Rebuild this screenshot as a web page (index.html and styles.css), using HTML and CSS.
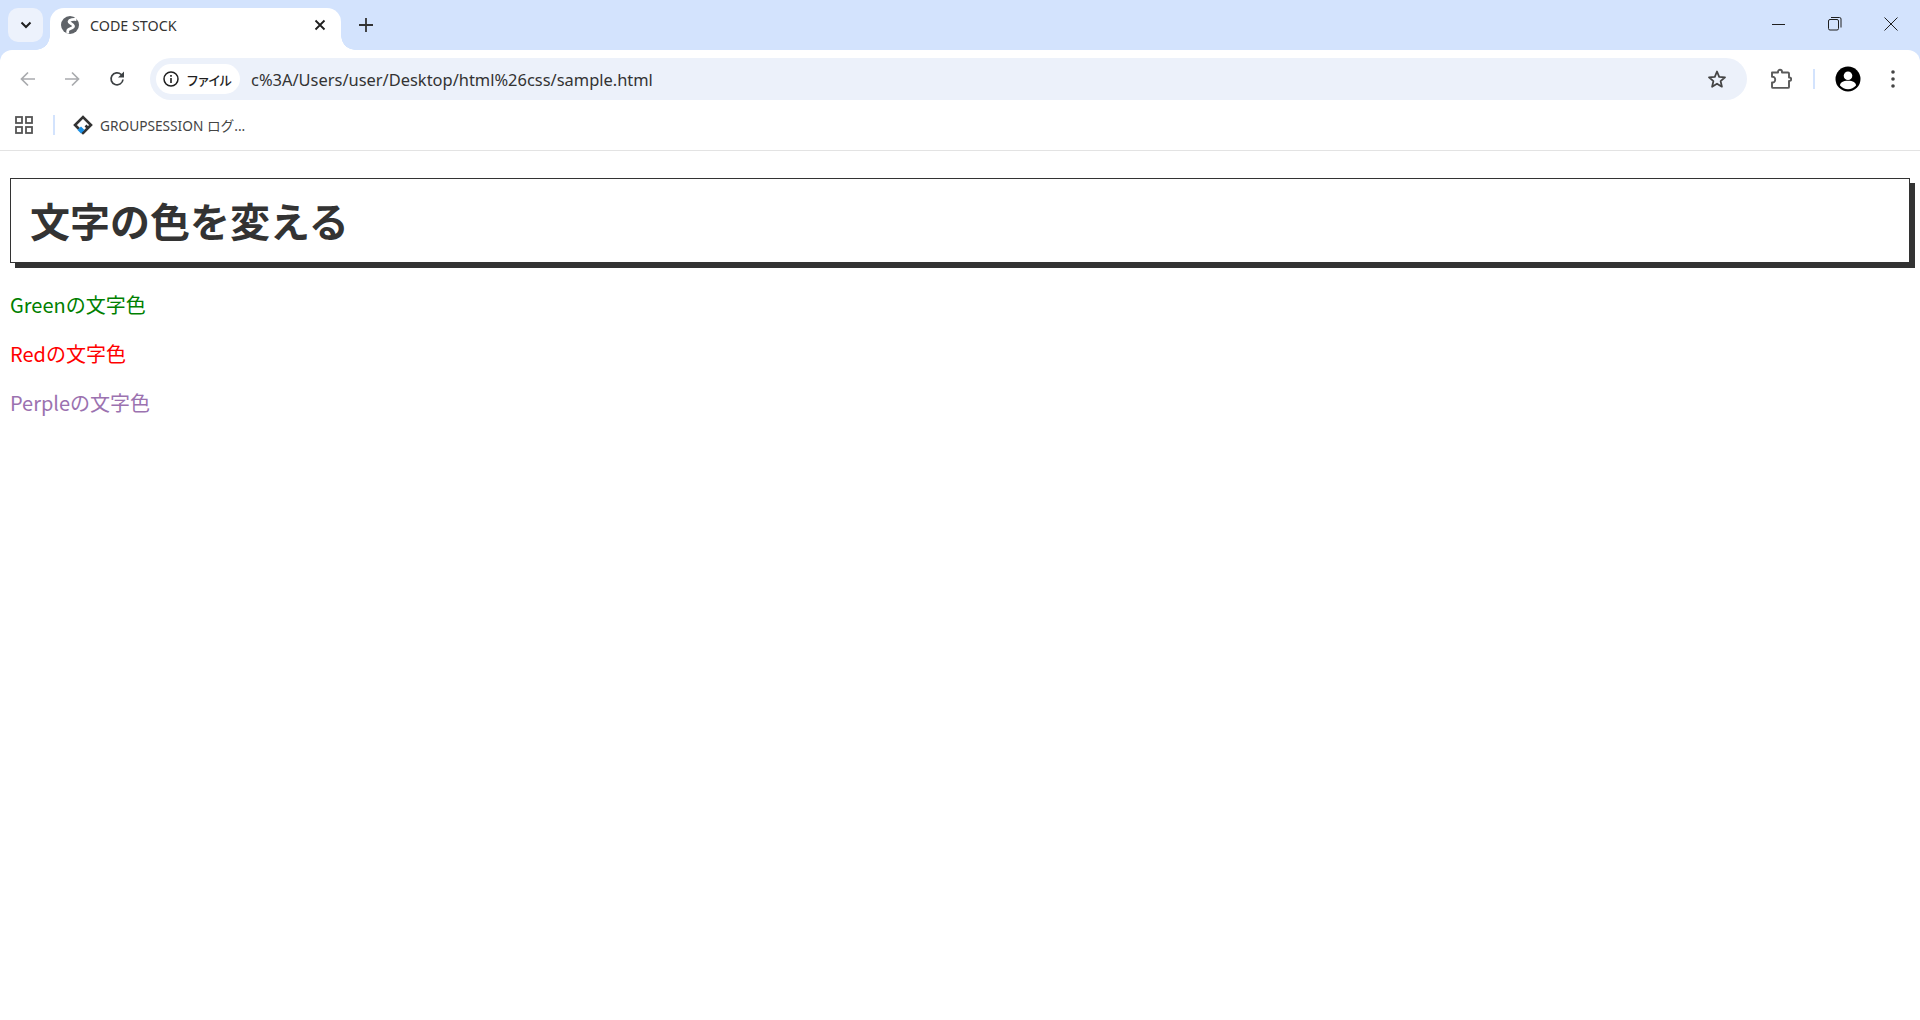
FILE: index.html
```html
<!DOCTYPE html>
<html lang="ja">
<head>
<meta charset="utf-8">
<title>CODE STOCK</title>
<link rel="stylesheet" href="styles.css">
</head>
<body>
<header class="chrome">
  <div class="tabstrip">
    <button class="tab-search" aria-label="タブを検索">
      <svg width="16" height="16" viewBox="0 0 16 16"><path d="M3.500 5.500L8 10l4.500-4.500" fill="none" stroke="#1f1f1f" stroke-width="2"/></svg>
    </button>
    <div class="tab">
      <svg class="tab-favicon" width="18" height="18" viewBox="0 0 18 18"><circle cx="9" cy="9" r="9" fill="#5f6368"/><path d="M15.500 3.500C12.500 3 8.500 3.500 8 5.500c-.4 1.800 4 2.200 4.500 4.500.4 2-4.500 2.500-5.500 4-.5.800-.4 2-.2 3.500" fill="none" stroke="#fff" stroke-width="2.800"/></svg>
      <span class="tab-title">CODE STOCK</span>
      <svg class="tab-close" width="12" height="12" viewBox="0 0 12 12"><path d="M1.500 1.500l9 9M10.500 1.500l-9 9" stroke="#1f1f1f" stroke-width="1.800"/></svg>
    </div>
    <svg class="new-tab" width="14" height="14" viewBox="0 0 14 14"><path d="M7 0v14M0 7h14" stroke="#333" stroke-width="1.800"/></svg>
    <div class="window-controls">
      <svg width="14" height="14" viewBox="0 0 14 14"><path d="M0 7.500h13" stroke="#1f1f1f" stroke-width="1"/></svg>
      <svg width="14" height="14" viewBox="0 0 14 14"><rect x=".5" y="2.500" width="10" height="10.500" rx="1.500" fill="none" stroke="#1f1f1f"/><path d="M3 .5h8.500a1.500 1.500 0 0 1 1.500 1.500v8.500" fill="none" stroke="#1f1f1f"/></svg>
      <svg width="14" height="14" viewBox="0 0 14 14"><path d="M.5.5l13 13M13.500.5l-13 13" stroke="#1f1f1f" stroke-width="1"/></svg>
    </div>
  </div>
  <div class="toolbar">
    <svg class="nav-back" width="16" height="16" viewBox="0 0 16 16"><path d="M15 8H2M8 1.500L1.500 8 8 14.500" fill="none" stroke="#a9abae" stroke-width="1.700"/></svg>
    <svg class="nav-forward" width="16" height="16" viewBox="0 0 16 16"><path d="M1 8h13M8 1.500L14.500 8 8 14.500" fill="none" stroke="#a9abae" stroke-width="1.700"/></svg>
    <svg class="nav-reload" width="16" height="16" viewBox="0 0 16 16"><path d="M14 8.500a6 6 0 1 1-1.800-5L14 5" fill="none" stroke="#3c4043" stroke-width="1.700"/><path d="M15 .5v6H9z" fill="#3c4043"/></svg>
    <div class="omnibox">
      <div class="chip">
        <svg width="16" height="16" viewBox="0 0 16 16"><circle cx="8" cy="8" r="7" fill="none" stroke="#1f1f1f" stroke-width="1.500"/><path d="M8 7v5M8 4v1.800" stroke="#1f1f1f" stroke-width="1.600"/></svg>
        <span class="chip-label">ファイル</span>
      </div>
      <span class="url">c%3A/Users/user/Desktop/html%26css/sample.html</span>
      <svg class="star" width="20" height="20" viewBox="0 0 20 20"><path d="M10 2.500l2.200 5.300 5.800.5-4.400 3.800 1.300 5.600L10 14.700l-4.900 3 1.300-5.600L2 8.300l5.800-.5z" fill="none" stroke="#444" stroke-width="1.800" stroke-linejoin="round"/></svg>
    </div>
    <svg class="ext" width="22" height="22" viewBox="0 0 22 22"><path d="M2 4.500h6V3.800a2 2 0 0 1 4 0v.7h6a1 1 0 0 1 1 1V9.500h.5a1.700 1.700 0 0 1 0 3.400H19v6a1 1 0 0 1-1 1H3a1 1 0 0 1-1-1v-4.400c2 .3 3.200-1 3.200-2.900S4 8.500 2 8.800z" fill="#fff" stroke="#5a5a5a" stroke-width="1.900" stroke-linejoin="round"/></svg>
    <span class="toolbar-sep"></span>
    <svg class="avatar" width="26" height="26" viewBox="0 0 26 26"><circle cx="13" cy="13" r="12.500" fill="#000"/><circle cx="13" cy="9.800" r="4.300" fill="#fff"/><path d="M5 19.500c0-3 3-4.700 8-4.700s8 1.700 8 4.700c-2 2.300-5 3.700-8 3.700s-6-1.400-8-3.700z" fill="#fff"/></svg>
    <svg class="menu" width="4" height="18" viewBox="0 0 4 18"><circle cx="2" cy="2" r="1.800" fill="#444"/><circle cx="2" cy="9" r="1.800" fill="#444"/><circle cx="2" cy="16" r="1.800" fill="#444"/></svg>
  </div>
  <div class="bookmarks">
    <svg width="18" height="18" viewBox="0 0 18 18"><g fill="none" stroke="#555" stroke-width="1.800"><rect x="1" y="1" width="6" height="6"/><rect x="11" y="1" width="6" height="6"/><rect x="1" y="11" width="6" height="6"/><rect x="11" y="11" width="6" height="6"/></g></svg>
    <span class="bookmark-sep"></span>
    <svg class="bookmark-icon" width="20" height="20" viewBox="0 0 20 20"><path d="M6 14L2 10l8-8 8 8-8 8-1.500-1.500M10 18l5-5-2.500-2.500" fill="none" stroke="#333" stroke-width="2.600"/><path d="M8 11.500l3.500 3.500L8 18.500 4.500 15z" fill="#1a8fe3"/></svg>
    <span class="bookmark-label">GROUPSESSION ログ...</span>
  </div>
</header>
<main class="page">
  <h1 class="title">文字の色を変える</h1>
  <p class="green">Greenの文字色</p>
  <p class="red">Redの文字色</p>
  <p class="purple">Perpleの文字色</p>
</main>
</body>
</html>
```
FILE: styles.css
```css
* { box-sizing: border-box; }
html, body { margin: 0; padding: 0; background: #fff; }
body { font-family: "Noto Sans CJK JP", "Noto Sans", sans-serif; color: #333; }

.chrome { font-family: "Noto Sans", "Noto Sans CJK JP", sans-serif; background: #d3e3fd; }
.chrome svg { flex: none; display: block; }

.tabstrip {
  display: flex;
  align-items: flex-end;
  height: 50px;
}
.tab-search {
  width: 35px;
  height: 34px;
  margin: 0 7px 8px 8px;
  padding: 0;
  border: 0;
  border-radius: 10px;
  background: #edf2fc;
  display: flex;
  align-items: center;
  justify-content: center;
}
.tab {
  position: relative;
  width: 291px;
  height: 42px;
  display: flex;
  align-items: center;
  padding: 0 15px 8px 11px;
  background: #fff;
  border-radius: 14px 14px 0 0;
}
.tab::before,
.tab::after {
  content: "";
  position: absolute;
  bottom: 0;
  width: 14px;
  height: 14px;
}
.tab::before {
  left: -14px;
  background: radial-gradient(circle at 0 0, transparent 13.500px, #fff 14px);
}
.tab::after {
  right: -14px;
  background: radial-gradient(circle at 100% 0, transparent 13.500px, #fff 14px);
}
.tab-title {
  flex: 1;
  margin-left: 11px;
  font-size: 14.300px;
  color: #333;
}
.new-tab { margin: 0 0 18px 18px; }
.window-controls {
  margin-left: auto;
  align-self: flex-start;
  display: flex;
  gap: 42px;
  padding: 17px 22px 0 0;
}

.toolbar {
  display: flex;
  align-items: center;
  height: 50px;
  padding: 8px 0 0 20px;
  background: #fff;
  border-radius: 12px 12px 0 0;
}
.nav-forward { margin-left: 28px; }
.nav-reload { margin-left: 29px; }
.omnibox {
  display: flex;
  align-items: center;
  width: 1597px;
  height: 42px;
  margin-left: 25px;
  padding: 0 20px 0 6px;
  border-radius: 21px;
  background: #ecf1fa;
}
.chip {
  display: flex;
  align-items: center;
  gap: 7px;
  height: 30px;
  padding: 0 10px 0 7px;
  border-radius: 15px;
  background: #fff;
}
.chip-label {
  font-size: 13px;
  font-weight: 500;
  letter-spacing: -2px;
  font-family: "Noto Sans CJK JP", sans-serif;
  color: #1f1f1f;
}
.url { flex: 1; margin-left: 11px; font-size: 16.450px; color: #333; }
.ext { margin-left: 23px; }
.toolbar-sep { width: 2px; height: 20px; margin-left: 21px; background: #d3e3fd; }
.avatar { margin-left: 20px; }
.menu { margin-left: 30px; }

.bookmarks {
  display: flex;
  align-items: center;
  height: 51px;
  padding: 0 0 0 15px;
  background: #fff;
  border-bottom: 1px solid #e3e3e3;
}
.bookmark-sep { width: 2px; height: 20px; margin-left: 20px; background: #d3e3fd; }
.bookmark-icon { margin-left: 18px; }
.bookmark-label { margin-left: 7px; font-size: 13.700px; color: #444; }

.page { padding: 27px 10px 0; }
.title {
  margin: 0;
  padding: 12px 19px 13px;
  border: 1px solid #333;
  box-shadow: 5px 5px 0 #333;
  font-size: 40px;
  font-weight: 700;
  color: #333;
}
p { margin: 20px 0; font-size: 20px; }
.title + p { margin-top: 27px; }
.green { color: green; }
.red { color: red; }
.purple { color: #9b72b0; }
```
